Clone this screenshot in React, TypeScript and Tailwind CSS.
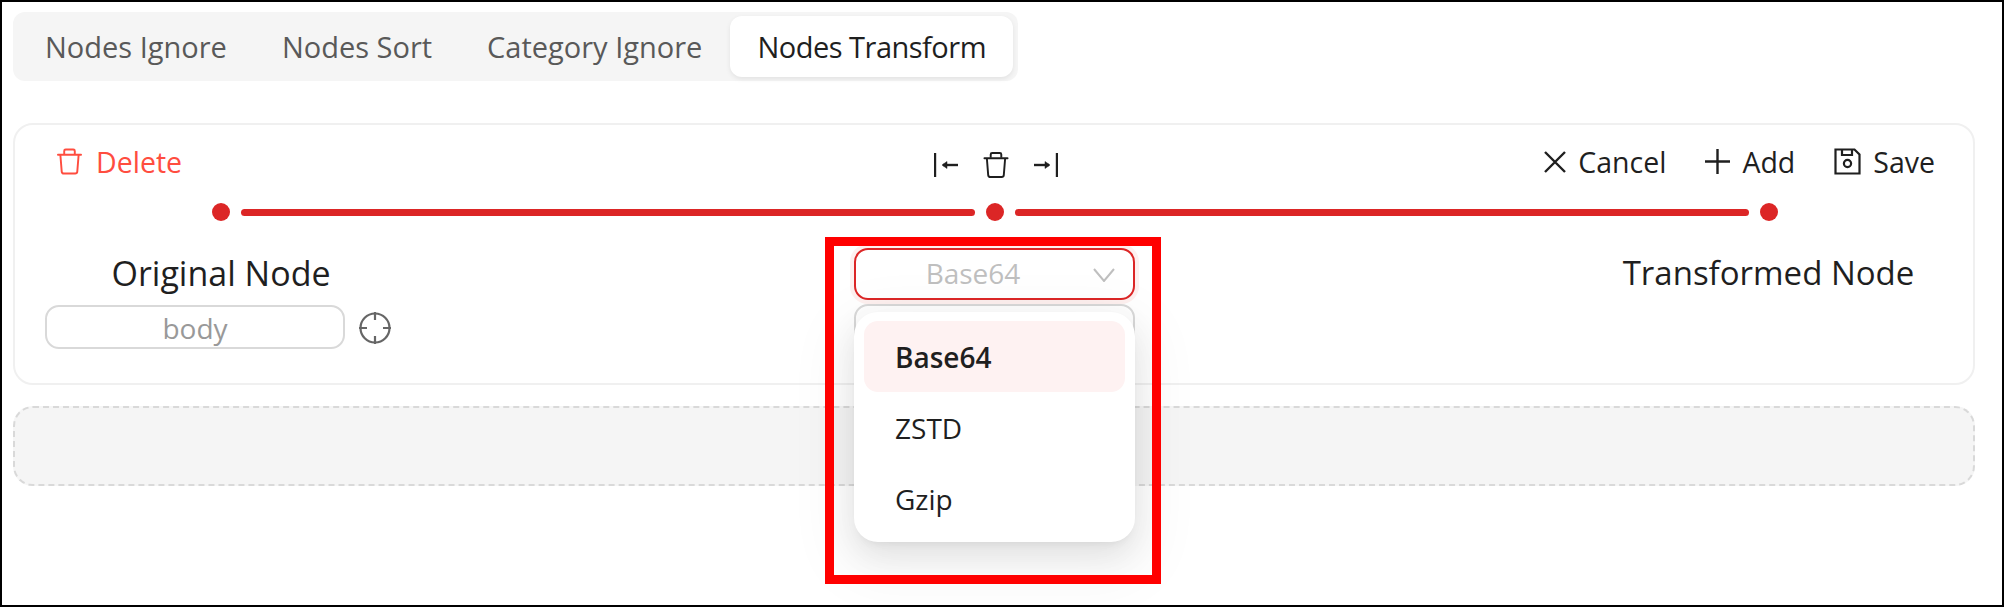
import React from "react";

const font = "font-['Open_Sans',sans-serif]";

const TrashIcon = ({ className }: { className: string }) => (
  <svg viewBox="0 0 26 27" fill="none" stroke="currentColor" strokeWidth="2" className={className}>
    <path d="M1 6.5h24" strokeLinecap="round" />
    <path d="M7.5 6V2.5q0-1.5 1.5-1.5h8q1.5 0 1.5 1.5V6" />
    <path d="M3.5 6.5l1.4 17.5q.2 2 2.2 2h11.8q2 0 2.2-2l1.4-17.5" />
  </svg>
);

const Action = ({ icon, label }: { icon: React.ReactNode; label: string }) => (
  <div className="flex items-center gap-[12px] text-[28.5px] text-[#1f1f1f]">
    {icon}
    <span className="pt-[2px]">{label}</span>
  </div>
);

const tabs = ["Nodes Ignore", "Nodes Sort", "Category Ignore"];

export default function App() {
  return (
    <div className={`relative h-[607px] w-[2004px] overflow-hidden border-2 border-black bg-white pl-[11px] pr-[27px] pt-[10px] ${font}`}>
      <div className="flex h-[69px] w-fit items-center gap-px rounded-xl bg-[#f5f5f5] px-[5px] text-[29px]">
        {tabs.map((tab) => (
          <div key={tab} className="px-[27px] text-[#595959]">
            {tab}
          </div>
        ))}
        <div className="flex h-[61px] items-center rounded-xl bg-white px-[27px] tracking-[-0.5px] text-[#1f1f1f] shadow-[0_2px_5px_rgba(0,0,0,0.08)]">
          Nodes Transform
        </div>
      </div>

      <div className="mt-[42px] h-[262px] rounded-[20px] border-2 border-[#f0f0f0] pt-[23px]">
        <div className="grid h-[27px] grid-cols-3 grid-rows-[27px] items-center pl-[42px] pr-[38px]">
          <div className="flex items-center gap-[14px] text-[28.5px] text-[#ff4d3f]">
            <TrashIcon className="h-[27px] w-[25px]" />
            <span className="pt-[2px]">Delete</span>
          </div>
          <div className="mt-[7px] flex items-center justify-center gap-[25px] text-[#1f1f1f]">
            <svg viewBox="0 0 24 24" fill="none" stroke="currentColor" className="h-[24px] w-[24px]">
              <path d="M1 0v24" strokeWidth="2.4" />
              <path d="M9 12h15" strokeWidth="2.4" />
              <path d="M8 12l5-3.5v7z" fill="currentColor" strokeWidth="0.5" />
            </svg>
            <TrashIcon className="h-[26px] w-[26px]" />
            <svg viewBox="0 0 24 24" fill="none" stroke="currentColor" className="h-[24px] w-[24px]">
              <path d="M23 0v24" strokeWidth="2.4" />
              <path d="M0 12h15" strokeWidth="2.4" />
              <path d="M16 12l-5-3.5v7z" fill="currentColor" strokeWidth="0.5" />
            </svg>
          </div>
          <div className="flex items-center justify-end gap-[39px]">
            <Action
              label="Cancel"
              icon={
                <svg viewBox="0 0 22 22" fill="none" stroke="currentColor" strokeWidth="2.4" className="h-[22px] w-[22px]">
                  <path d="M1 1l20 20M21 1L1 21" />
                </svg>
              }
            />
            <Action
              label="Add"
              icon={
                <svg viewBox="0 0 25 25" fill="none" stroke="currentColor" strokeWidth="2.4" className="h-[25px] w-[25px]">
                  <path d="M12.5 0v25M0 12.5h25" />
                </svg>
              }
            />
            <Action
              label="Save"
              icon={
                <svg viewBox="0 0 27 27" fill="none" stroke="currentColor" strokeWidth="2.2" className="h-[27px] w-[27px]">
                  <path d="M1.5 1.5h19l5 5v19h-24z" />
                  <path d="M8 1.5v5.5h10V1.5" />
                  <circle cx="13.5" cy="15.5" r="3.6" />
                </svg>
              }
            />
          </div>
        </div>

        <div className="ml-[197px] mt-[28px] flex h-[18px] w-[1566px] items-center gap-[11px]">
          <div className="size-[18px] rounded-full bg-[#dc2626]" />
          <div className="mt-px h-[7px] flex-1 rounded-full bg-[#dc2626]" />
          <div className="size-[18px] rounded-full bg-[#dc2626]" />
          <div className="mt-px h-[7px] flex-1 rounded-full bg-[#dc2626]" />
          <div className="size-[18px] rounded-full bg-[#dc2626]" />
        </div>

        <div className="mt-[27px] flex pl-[30px] pr-[30px]">
          <div className="w-[352px] pt-[5px]">
            <div className="h-[44px] text-center text-[34px] leading-[40px] text-[#1f1f1f]">Original Node</div>
            <div className="mt-[8px] flex items-center gap-[14px]">
              <div className="flex h-[44px] w-[300px] items-center justify-center rounded-[14px] border-2 border-[#d9d9d9] pt-[2px] text-[28px] text-[#999999]">
                body
              </div>
              <svg viewBox="0 0 32 32" fill="none" stroke="#666666" strokeWidth="2.2" className="mt-[2px] h-[32px] w-[32px]">
                <circle cx="16" cy="16" r="14.5" />
                <path d="M16 0v8M16 24v8M0 16h8M24 16h8" />
              </svg>
            </div>
          </div>

          <div className="relative ml-[457px] w-[281px]">
            <div className="relative flex h-[52px] items-center justify-center rounded-[14px] border-2 border-[#dc2626] pb-[3px] pr-[43px] text-[28px] text-[#bfbfbf] shadow-[0_0_0_4px_#fef0ef]">
              Base64
              <svg viewBox="0 0 22 14" fill="none" stroke="#bfbfbf" strokeWidth="2" className="absolute right-[18px] top-[18px] h-[14px] w-[22px]">
                <path d="M1 1l10 12L21 1" />
              </svg>
            </div>
            <div className="mt-[4px] h-[46px] rounded-[14px] border-2 border-[#d9d9d9]" />
            <div className="absolute left-0 top-[64px] h-[230px] w-[281px] rounded-[24px] bg-white px-[10px] py-[9px] text-[28px] text-[#1f1f1f] shadow-[0_12px_30px_rgba(0,0,0,0.08),0_6px_12px_-8px_rgba(0,0,0,0.12),0_18px_56px_16px_rgba(0,0,0,0.05)]">
              <div className="flex h-[71px] items-center rounded-[14px] bg-[#fef2f2] pl-[31px] font-semibold">Base64</div>
              <div className="flex h-[71px] items-center pl-[31px]">ZSTD</div>
              <div className="flex h-[71px] items-center pl-[31px]">Gzip</div>
            </div>
          </div>

          <div className="ml-auto w-[349px] pt-[5px]">
            <div className="h-[44px] text-center text-[33px] leading-[40px] text-[#1f1f1f]">Transformed Node</div>
          </div>
        </div>
      </div>

      <div className="mt-[21px] h-[80px] rounded-[20px] border-2 border-dashed border-[#d9d9d9] bg-[#f5f5f5]" />

      <div className="absolute left-[823px] top-[235px] h-[347px] w-[336px] border-[9px] border-[#ff0000]" />
    </div>
  );
}
